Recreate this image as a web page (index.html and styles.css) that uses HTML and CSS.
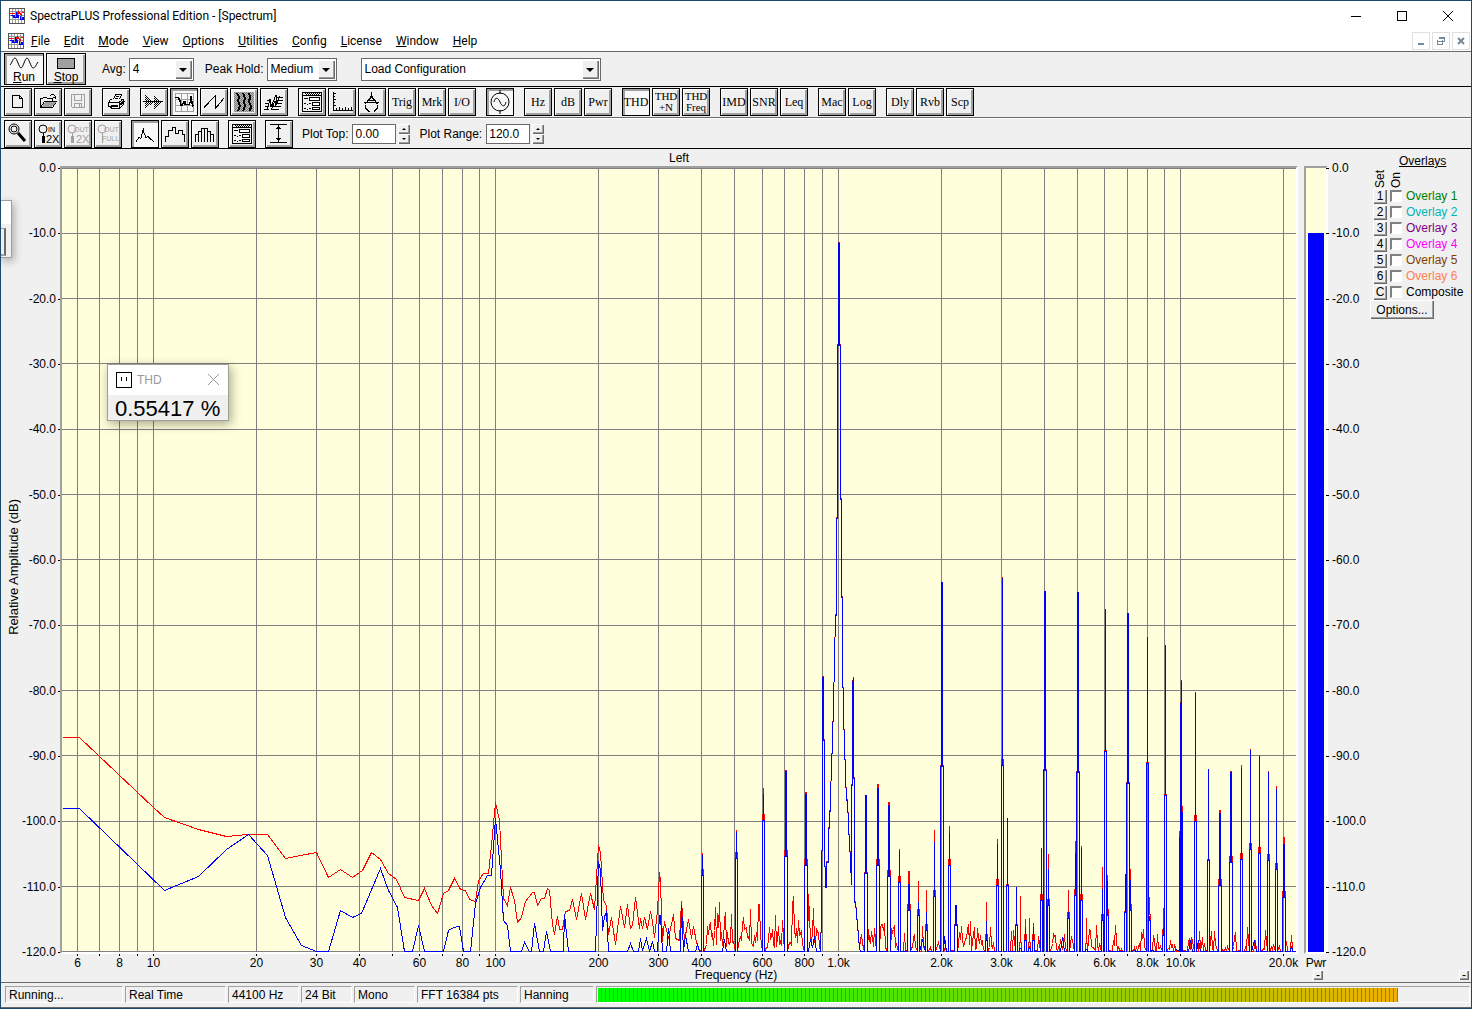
FILE: index.html
```html
<!DOCTYPE html>
<html lang="en">
<head>
  <meta charset="UTF-8">
  <title>SpectraPLUS Professional Edition - [Spectrum]</title>
  <link rel="stylesheet" href="styles.css">
</head>
<body>

<svg class="defs" width="0" height="0" aria-hidden="true">
  <defs>
    <pattern id="dither" width="2" height="2" patternUnits="userSpaceOnUse">
      <rect width="1" height="1" fill="#000"/>
      <rect x="1" y="1" width="1" height="1" fill="#000"/>
    </pattern>
    <symbol id="app" viewBox="0 0 16 16">
      <rect x=".5" y=".5" width="15" height="15" fill="#fff" stroke="#555"/>
      <path d="M3.5 1v14M6.5 1v14M9.5 1v14M12.5 1v14M1 3.5h14M1 7.5h14M1 11.5h14" stroke="#999" fill="none"/>
      <path d="M1 5.5h5M8 6.5l2 -3M10 4.5l3 3M13 4.5h2" stroke="#f00" stroke-width="1.500" fill="none"/>
      <path d="M2 7.500h3v2h3v-3l2 3M11 8.5l1 3h2v-3" stroke="#00f" stroke-width="1.500" fill="none"/>
    </symbol>
    <symbol id="form" viewBox="0 0 26 26">
      <path d="M3.5 3.5h19v19h-19zM3 6.5h20" fill="none" stroke="#000"/>
      <rect x="6" y="4" width="15" height="2" fill="url(#dither)" stroke="none"/>
      <path d="M10.5 8.5h10v3h-10zM13.5 13.5h7v3h-7zM13.5 18.5h7v2h-7z" fill="#fff" stroke="#000"/>
      <path d="M5 9.5h4M5 14.5h2M8 15.5h1M10 14.5h2M5 19.5h2M8 20.5h1M10 19.5h2" stroke="#000"/>
    </symbol>
  </defs>
</svg>

<header class="titlebar">
  <svg class="app-icon"><use href="#app"/></svg>
  <span class="title">SpectraPLUS Professional Edition - [Spectrum]</span>
  <div class="win-buttons">
    <button aria-label="Minimize"><svg width="10" height="10"><path d="M0 5.5h10"/></svg></button>
    <button aria-label="Maximize"><svg width="10" height="10"><path d="M.5 .5h9v9h-9z"/></svg></button>
    <button aria-label="Close"><svg class="smooth" width="10" height="10"><path d="M0 0l10 10M10 0L0 10"/></svg></button>
  </div>
</header>

<nav class="menubar">
  <svg class="app-icon"><use href="#app"/></svg>
  <button><u>F</u>ile</button>
  <button><u>E</u>dit</button>
  <button><u>M</u>ode</button>
  <button><u>V</u>iew</button>
  <button><u>O</u>ptions</button>
  <button><u>U</u>tilities</button>
  <button><u>C</u>onfig</button>
  <button><u>L</u>icense</button>
  <button><u>W</u>indow</button>
  <button><u>H</u>elp</button>
  <div class="mdi-buttons">
    <button aria-label="Minimize document"><svg width="10" height="10"><path d="M2 8h6" stroke-width="2"/></svg></button>
    <button aria-label="Restore document"><svg width="10" height="10"><path d="M3.5 3V1.5h5v4H7M1 5h6M1.5 4v4.5h5V4M3 2h6"/></svg></button>
    <button aria-label="Close document"><svg class="smooth" width="10" height="10"><path d="M2 2l6 6M8 2L2 8" stroke-width="2"/></svg></button>
  </div>
</nav>

<div class="toolbar toolbar-run">
  <div class="group">
    <button class="big on">
      <svg width="32" height="14" class="smooth"><path d="M2 9C4 7 5 2 7 2S11 12 13 12S17 2 19 2S23 12 25 12S28 9 30 6"/></svg>
      <span><u>R</u>un</span>
    </button>
    <button class="big">
      <svg width="32" height="14"><rect x="7.500" y="2.500" width="17" height="10" fill="#a0a0a0"/></svg>
      <span><u>S</u>top</span>
    </button>
  </div>
  <label for="avg">Avg:</label>
  <span class="select w-avg"><select id="avg"><option>4</option></select></span>
  <label for="peak">Peak Hold:</label>
  <span class="select w-peak"><select id="peak"><option>Medium</option></select></span>
  <span class="select w-config"><select aria-label="Configuration"><option>Load Configuration</option></select></span>
</div>

<div class="toolbar toolbar-main">
  <div class="group">
    <button class="tool" aria-label="New"><svg><path d="M7.500 6.500h7l3 3v9h-10zM14.500 6.500v3h3"/></svg></button>
    <button class="tool" aria-label="Open"><svg><path d="M5.500 18.500v-9h2l1 -1h3l1 1h5v3M5.500 18.500l4 -6h12l-4 6z"/><path d="M7 18l3 -5h11l-4 5z" fill="#a0a0a0" stroke="none"/><path d="M14.500 7.500l2 -2h2l2 2v2M18 8.500h3"/></svg></button>
    <button class="tool" aria-label="Save" disabled><svg><path d="M6.500 5.500h13v13h-12l-1 -1zM9.500 5.500v6h7v-6M9.500 18.500v-4h7v4M14.500 15v3"/></svg></button>
  </div>
  <div class="group">
    <button class="tool" aria-label="Print"><svg><path d="M10.500 10.500l2 -5h6l-2 5M13 7.500h3M12 9.500h3M8.500 10.500h-1l-2 3v4h2l1 2h8l4 -4v-5h-3M6 13.500h10l4 -3M16.500 14v5"/><path d="M8 16.500h7M17 16l4 -4" stroke-width="2"/></svg></button>
  </div>
  <div class="group">
    <button class="tool" aria-label="Time series"><svg><path d="M4 6l9 7l-9 7zM13 6l8 7l-8 7z" fill="url(#dither)" stroke="none"/><path d="M2 12.500h20"/></svg></button>
    <button class="tool on" aria-label="Spectrum"><svg><path class="grey" d="M4.500 4v19M10.500 4v19M16.500 4v19M22.500 4v19M4 4.500h19M4 10.500h19M4 16.500h19M4 22.500h19"/><path d="M4 8.500h3l2 3l1 5h1l2 -4h1v3h4l2 -4v-5v3l2 8" stroke-width="1.500"/></svg></button>
    <button class="tool" aria-label="Phase"><svg><path d="M3 18.500L14.500 6.500v13L23 9"/></svg></button>
    <button class="tool" aria-label="Spectrogram"><svg><rect x="3" y="3" width="20" height="20" fill="#b8b8b8" stroke="none"/><rect x="3" y="3" width="20" height="20" fill="url(#dither)" opacity=".3" stroke="none"/><path d="M6 4l2 4l-1 4l2 5l-2 5M12 4l2 5l-1 4l1 4l-2 5M18 4l1 4l-1 5l2 4l-1 5" stroke-width="2"/></svg></button>
    <button class="tool" aria-label="3-D surface"><svg><path d="M3 20.500h5M11 20.500h7M4 17.500h4M12 17.500h8M4 14.500h3M14 14.500h7M6 11.500h4M17 11.500h5M15 8.500h7M6 21l3 -11l1 8l5 -12v9l4 -8M10 21l4 -9v6l3 -6"/></svg></button>
  </div>
  <div class="group">
    <button class="tool" aria-label="Settings"><svg><use href="#form"/></svg></button>
    <button class="tool" aria-label="Scaling"><svg><path d="M4.500 3v18.500h19M4 4.500h3M4 7.500h2M4 10.500h3M4 13.500h2M4 16.500h3M7.500 19v2M10.500 18v3M13.500 19v2M16.500 18v3M19.500 19v2M22.500 18v3"/></svg></button>
    <button class="tool" aria-label="Calibration"><svg><path d="M12.500 3v4M12.500 7l-6 8M12.500 7l6 8M12.500 8l-2 3h4zM5 13.500h15M6.500 16v3l3 3h1M18.500 16v3l-3 3h-1"/></svg></button>
    <button class="tool">Trig</button>
    <button class="tool">Mrk</button>
    <button class="tool">I/O</button>
  </div>
  <div class="group">
    <button class="tool on" aria-label="Signal generator"><svg class="smooth"><circle cx="13" cy="13" r="9"/><path d="M13 1v4M13 21v4M7 13c1 -5 4 -5 6 0s5 5 6 0"/></svg></button>
  </div>
  <div class="group">
    <button class="tool">Hz</button>
    <button class="tool">dB</button>
    <button class="tool">Pwr</button>
  </div>
  <div class="group">
    <button class="tool on">THD</button>
    <button class="tool two">THD<br>+N</button>
    <button class="tool two">THD<br>Freq</button>
  </div>
  <div class="group">
    <button class="tool">IMD</button>
    <button class="tool">SNR</button>
    <button class="tool">Leq</button>
  </div>
  <div class="group">
    <button class="tool">Mac</button>
    <button class="tool">Log</button>
  </div>
  <div class="group">
    <button class="tool">Dly</button>
    <button class="tool">Rvb</button>
    <button class="tool">Scp</button>
  </div>
</div>

<div class="toolbar toolbar-plot">
  <div class="group">
    <button class="tool" aria-label="Zoom"><svg class="smooth"><circle cx="9" cy="8" r="5"/><circle cx="9" cy="8" r="3"/><path d="M13 12l7 8" stroke-width="3"/></svg></button>
    <button class="tool"><svg><circle class="smooth" cx="8" cy="8" r="4"/><path d="M8 12v3"/><path d="M8 15v7" stroke-width="3"/><text x="13" y="11" class="s">IN</text><text x="11" y="22" class="m">2X</text></svg></button>
    <button class="tool" disabled><svg><circle class="smooth" cx="7" cy="8" r="4"/><path d="M7 12v3"/><path d="M7 15v7" stroke-width="3"/><text x="9" y="11" class="s">OUT</text><text x="11" y="22" class="m">2X</text></svg></button>
    <button class="tool" disabled><svg><circle class="smooth" cx="7" cy="8" r="4"/><path d="M7 12v10"/><text x="9" y="11" class="s">OUT</text><text x="7" y="20" class="s">FULL</text></svg></button>
  </div>
  <div class="group">
    <button class="tool on" aria-label="Line plot"><svg><path d="M4 20.500l3 -4l2 1l2 -8v-3v3l3 7l2 -1l3 3l3 2"/></svg></button>
    <button class="tool" aria-label="Step plot"><svg><path d="M3.500 21v-6h3v-6h4v-3h3v6h3v-3h4v4h2v8"/></svg></button>
    <button class="tool" aria-label="Bar plot"><svg><path d="M3.500 21v-8h3v-3h3v-3h6v3h3v3h3v8M6.500 10v11M9.500 7v14M12.500 7v14M15.500 7v14M18.500 10v11"/></svg></button>
  </div>
  <div class="group">
    <button class="tool" aria-label="Plot settings"><svg><use href="#form"/></svg></button>
  </div>
  <div class="group">
    <button class="tool" aria-label="Autoscale"><svg><path d="M4 3.500h17M4 21.500h17M12.500 4v17M10 7.500h5M11 6.500h3M10 17.500h5M11 18.500h3"/></svg></button>
  </div>
  <label for="top">Plot Top:</label>
  <input class="num" id="top" type="text" value="0.00">
  <span class="spin"><button aria-label="Plot top up" class="up"></button><button aria-label="Plot top down" class="down"></button></span>
  <label for="range">Plot Range:</label>
  <input class="num" id="range" type="text" value="120.0">
  <span class="spin"><button aria-label="Plot range up" class="up"></button><button aria-label="Plot range down" class="down"></button></span>
</div>

<main class="view">
  <div class="y-title"><span>Relative Amplitude (dB)</span></div>
  <div class="scale scale-left" id="dbLeft"></div>
  <section class="chart">
    <h2>Left</h2>
    <div class="plot">
      <svg id="plot" viewBox="62 168 1234 784" preserveAspectRatio="none"></svg>
    </div>
    <svg class="x-labels" id="xLabels"></svg>
  </section>
  <section class="meter">
    <div class="meter-box"><div class="meter-track"><div class="meter-fill"></div></div></div>
    <span class="meter-name">Pwr</span>
  </section>
  <div class="scale scale-right" id="dbRight"></div>
  <aside class="overlays">
    <h2>Overlays</h2>
    <div class="heads"><span>Set</span><span>On</span></div>
    <div class="row"><button>1</button><input type="checkbox" id="o1"><label for="o1" class="c1">Overlay 1</label></div>
    <div class="row"><button>2</button><input type="checkbox" id="o2"><label for="o2" class="c2">Overlay 2</label></div>
    <div class="row"><button>3</button><input type="checkbox" id="o3"><label for="o3" class="c3">Overlay 3</label></div>
    <div class="row"><button>4</button><input type="checkbox" id="o4"><label for="o4" class="c4">Overlay 4</label></div>
    <div class="row"><button>5</button><input type="checkbox" id="o5"><label for="o5" class="c5">Overlay 5</label></div>
    <div class="row"><button>6</button><input type="checkbox" id="o6"><label for="o6" class="c6">Overlay 6</label></div>
    <div class="row"><button>C</button><input type="checkbox" id="o7"><label for="o7">Composite</label></div>
    <button class="options">Options...</button>
  </aside>
</main>

<div class="x-title">
  <span></span>
  <span>Frequency (Hz)</span>
  <div class="minis">
    <button aria-label="Hide power meter">-</button>
    <button aria-label="Hide overlays">-</button>
  </div>
</div>

<footer class="status">
  <span class="cell w1">Running...</span>
  <span class="cell w2">Real Time</span>
  <span class="cell w3">44100 Hz</span>
  <span class="cell w4">24 Bit</span>
  <span class="cell w5">Mono</span>
  <span class="cell w2">FFT 16384 pts</span>
  <span class="cell w6">Hanning</span>
  <div class="cell level"><div class="level-fill"></div></div>
</footer>

<div class="sliver"><div class="sliver-body"></div></div>

<div class="popup">
  <div class="popup-title">
    <svg class="popup-icon" width="16" height="16"><path d="M.5 .5h15v15h-15z"/><path d="M5.500 5v4M10.500 5v4"/></svg>
    <span>THD</span>
    <button aria-label="Close THD"><svg class="smooth" width="11" height="11"><path d="M0 0l11 11M11 0L0 11"/></svg></button>
  </div>
  <div class="popup-value">0.55417 %</div>
</div>

<script src="script.js"></script>
</body>
</html>
```
FILE: styles.css
```css
* { box-sizing: border-box; }
body {
  margin: 0;
  min-height: 100vh;
  display: flex;
  flex-direction: column;
  position: relative;
  border: 1px solid #1b4a6b;
  background: #f0f0f0;
  color: #000;
  font: 12px/16px "Liberation Sans", Arial, sans-serif;
}
button, input, select { font: inherit; color: inherit; margin: 0; padding: 0; }
button { border: 0; background: none; }
h2 { margin: 0; font: inherit; }
svg { fill: none; stroke: #000; shape-rendering: crispEdges; }
.smooth { shape-rendering: auto; }
.defs { position: absolute; }
#dither rect { stroke: none; }

/* title and menu */
.titlebar, .menubar {
  display: flex;
  align-items: center;
  background: #fff;
  font-family: Roboto, "Segoe UI", sans-serif;
  font-size: 12px;
}
.titlebar { height: 29px; padding-left: 8px; }
.menubar { height: 22px; padding: 0 1px 0 7px; border-bottom: 1px solid #696969; }
.app-icon { width: 16px; height: 16px; flex: none; stroke: none; }
.title { margin-left: 5px; }
.menubar > button { padding: 0 7px; }
.win-buttons { margin-left: auto; display: flex; }
.win-buttons button { width: 46px; height: 28px; }
.win-buttons svg { display: block; margin: auto; }
.mdi-buttons { margin-left: auto; display: flex; gap: 2px; }
.mdi-buttons button { width: 18px; height: 18px; border: 1px solid #e0e0e0; }
.mdi-buttons svg { display: block; margin: auto; stroke: #778899; }

/* toolbars */
.toolbar { display: flex; align-items: center; padding-left: 3px; border-bottom: 1px solid #000; }
.toolbar-run { height: 35px; }
.toolbar-main { height: 31px; border-bottom-color: #696969; }
.toolbar-plot { height: 31px; border-top: 1px solid #fff; }
.group { display: flex; gap: 2px; margin-right: 10px; }
.toolbar-plot .group { margin-right: 9px; }
.toolbar-run .group { margin-right: 16px; }
.tool, .big {
  border: 1px solid #000;
  background: #f0f0f0;
  box-shadow: inset 1px 1px #fff, inset -2px -2px #a0a0a0;
  text-align: center;
}
.tool { width: 28px; height: 28px; font: 12px/26px "Liberation Serif", "Times New Roman", serif; white-space: nowrap; display: flex; align-items: center; justify-content: center; }
.tool svg { display: block; width: 26px; height: 26px; flex: none; }
.tool:disabled svg { stroke: #a0a0a0; }
.tool text { stroke: none; fill: #000; font-family: "Liberation Sans", Arial, sans-serif; }
.tool:disabled text { fill: #a0a0a0; }
.tool .s { font-size: 7px; }
.tool .m { font-size: 11px; }
.tool .grey { stroke: #a0a0a0; }
.two { font-size: 11px; line-height: 11px; }
.big { width: 40px; height: 32px; line-height: 14px; }
.big svg { display: block; margin: 1px auto 0; }
.big span { display: block; }
.tool.on, .big.on { background: #f8f8f8; box-shadow: inset 2px 2px #a0a0a0; }

.toolbar label { margin-right: 3px; }
.toolbar-plot label { margin-right: 4px; }
.select { position: relative; display: flex; height: 23px; margin-right: 11px; }
.select select {
  width: 100%;
  appearance: none;
  border: 1px solid #696969;
  border-radius: 0;
  background: #fff;
  padding: 0 20px 0 3px;
}
.select::before {
  content: "";
  position: absolute;
  right: 2px;
  top: 2px;
  width: 17px;
  height: 19px;
  background: #f0f0f0;
  box-shadow: inset 1px 1px #fff, inset -1px -1px #696969, inset -2px -2px #a0a0a0;
  pointer-events: none;
}
.select::after {
  content: "";
  position: absolute;
  right: 7px;
  top: 10px;
  border: 4px solid transparent;
  border-top-color: #000;
  border-bottom: 0;
  pointer-events: none;
}
.w-avg { width: 65px; }
.w-peak { width: 70px; margin-right: 24px; }
.w-config { width: 240px; }
.num { width: 44px; height: 20px; border: 1px solid #696969; background: #fff; padding: 0 2px; }
.spin { display: flex; flex-direction: column; width: 12px; margin: 0 9px 0 2px; }
.spin button {
  height: 10px;
  display: flex;
  align-items: center;
  justify-content: center;
  box-shadow: inset 1px 1px #fff, inset -1px -1px #696969, inset -2px -2px #a0a0a0;
}
.spin button::before { content: ""; border: 2px solid transparent; }
.spin .up::before { border-bottom-color: #000; border-top: 0; }
.spin .down::before { border-top-color: #000; border-bottom: 0; }

/* spectrum view */
.view { flex: 1; display: flex; padding-left: 1px; min-height: 400px; }
.y-title { width: 20px; padding: 16px 0 0 4px; display: flex; align-items: center; justify-content: center; font-size: 13px; }
.y-title span { writing-mode: vertical-rl; transform: rotate(180deg); white-space: nowrap; }
.scale { display: flex; flex-direction: column; justify-content: space-between; margin: 11px 0 8px; }
.scale span { position: relative; white-space: nowrap; }
.scale-left { width: 38px; text-align: right; padding-right: 4px; }
.scale-right { width: 42px; padding-left: 4px; }
.scale span::after { content: ""; position: absolute; top: 8px; width: 3px; height: 1px; background: #000; }
.scale-left span::after { right: -5px; }
.scale-right span::after { left: -6px; }
.chart { flex: 1; min-width: 0; display: flex; flex-direction: column; }
.chart h2 { height: 17px; line-height: 18px; text-align: center; }
.plot { flex: 1; min-height: 0; position: relative; background: #ffffdc; border: 2px solid #fff; border-top-color: #a0a0a0; border-left-color: #a0a0a0; }
.plot svg { position: absolute; width: 100%; height: 100%; }
.grid { stroke: #808080; }
.peak-hold { stroke: #f00; }
.live { stroke: #00f; }
.grid, .peak-hold, .live { vector-effect: non-scaling-stroke; }
.x-labels { width: calc(100% - 4px); height: 14px; margin-left: 2px; overflow: visible; }
.x-labels text { fill: #000; stroke: none; text-anchor: middle; }
.meter { width: 24px; margin-left: 6px; padding-top: 17px; display: flex; flex-direction: column; }
.meter-box { flex: 1; display: flex; border: 2px solid #fff; border-top-color: #a0a0a0; border-left-color: #a0a0a0; background: #ffffdc; }
.meter-track { flex: 1; display: flex; align-items: flex-end; padding: 0 2px; }
.meter-fill { width: 100%; height: 91.7%; background: #00f; }
.meter-name { height: 14px; line-height: 18px; text-align: center; }

.overlays { width: 101px; padding-top: 4px; }
.overlays h2 { padding-left: 29px; text-decoration: underline; }
.heads { display: flex; height: 19px; padding-left: 2px; align-items: flex-end; }
.heads span { writing-mode: vertical-rl; transform: rotate(180deg); width: 16px; }
.row { display: flex; align-items: center; gap: 3px; height: 16px; padding-left: 3px; white-space: nowrap; }
.row button, .options, .minis button {
  background: #f0f0f0;
  box-shadow: inset 1px 1px #fff, inset -1px -1px #696969, inset -2px -2px #a0a0a0;
}
.row button { width: 14px; height: 15px; line-height: 14px; }
.row input {
  appearance: none;
  width: 12px;
  height: 12px;
  background: #fff;
  border: 1px solid #fff;
  border-top: 2px solid #808080;
  border-left: 2px solid #808080;
}
.row label { margin-left: 1px; }
.c1 { color: #008000; }
.c2 { color: #00b4b4; }
.c3 { color: #800080; }
.c4 { color: #f0f; }
.c5 { color: #804000; }
.c6 { color: #ff8050; }
.options { width: 64px; height: 19px; }

.x-title { display: grid; grid-template-columns: 1fr auto 1fr; height: 14px; line-height: 14px; }
.minis { display: flex; justify-content: flex-end; gap: 136px; padding: 2px 2px 0 0; }
.minis button { width: 10px; height: 10px; line-height: 8px; }

/* status bar */
.status {
  display: flex;
  gap: 2px;
  height: 26px;
  padding: 3px 1px 4px 4px;
  border-top: 1px solid #696969;
  border-bottom: 1px solid #696969;
}
.cell { border: 1px solid #fff; border-top-color: #a0a0a0; border-left-color: #a0a0a0; padding-left: 3px; line-height: 16px; white-space: nowrap; }
.w1 { width: 118px; }
.w2 { width: 101px; }
.w3 { width: 71px; }
.w4 { width: 51px; }
.w5 { width: 61px; }
.w6 { width: 74px; }
.level { flex: 1; padding: 1px; }
.level-fill {
  width: 92%;
  height: 14px;
  background:
    repeating-linear-gradient(90deg, transparent 0 3px, #808040 3px 4px),
    linear-gradient(90deg, #0f0 5%, #f0b000);
}

/* floating windows */
.sliver {
  position: absolute;
  left: -1px;
  top: 199px;
  width: 12px;
  height: 58px;
  padding-top: 23px;
  background: #fff;
  border: 1px solid #a0a0a0;
  border-left: 0;
  box-shadow: 2px 3px 8px rgba(0, 0, 0, .3);
}
.sliver-body { height: 33px; background: #f0f0f0; padding: 4px 5px 4px 0; }
.sliver-body::before { content: ""; display: block; height: 25px; border: 1px solid #a0a0a0; border-width: 1px 2px 2px 0; border-right-color: #696969; }
.popup {
  position: absolute;
  left: 106px;
  top: 363px;
  width: 122px;
  background: #f0f0f0;
  border: 1px solid #a0a090;
  box-shadow: 2px 3px 10px rgba(0, 0, 0, .35);
}
.popup-title { display: flex; align-items: center; gap: 5px; height: 30px; padding: 0 9px 1px 8px; background: #fff; color: #999; }
.popup-title button { margin-left: auto; height: 11px; }
.popup-title button svg { display: block; stroke: #999; }
.popup-value { height: 25px; padding-left: 7px; font-size: 22px; line-height: 28px; white-space: nowrap; }
```
FILE: script.js
```js
const NS = 'http://www.w3.org/2000/svg';
const plot = document.getElementById('plot');
const xLabels = document.getElementById('xLabels');

const LEFT = 62, RIGHT = 1296, TOP = 168, FLOOR = 951;
const xOf = f => 153 + 342.5 * Math.log10(f / 10);

function add(parent, tag, attrs, text) {
  const el = document.createElementNS(NS, tag);
  for (const k in attrs) el.setAttribute(k, attrs[k]);
  if (text) el.textContent = text;
  parent.appendChild(el);
}

// grid
for (let db = 0; db <= 120; db += 10) {
  const y = Math.floor(TOP + db * 6.53) + 0.5;
  add(plot, 'path', { class: 'grid', d: `M${LEFT} ${y}H${RIGHT}` });
  for (const id of ['dbLeft', 'dbRight']) {
    const s = document.createElement('span');
    s.textContent = (db ? '-' : '') + db.toFixed(1);
    document.getElementById(id).appendChild(s);
  }
}
const named = { 6: '6', 8: '8', 10: '10', 20: '20', 30: '30', 40: '40', 60: '60', 80: '80', 100: '100', 200: '200',
  300: '300', 400: '400', 600: '600', 800: '800', 1000: '1.0k', 2000: '2.0k', 3000: '3.0k', 4000: '4.0k',
  6000: '6.0k', 8000: '8.0k', 10000: '10.0k', 20000: '20.0k' };
for (const decade of [1, 10, 100, 1000, 10000]) {
  for (let n = 1; n < 10; n++) {
    const f = n * decade;
    if (f < 6 || f > 21000) continue;
    const x = Math.floor(xOf(f)) + 0.5;
    const pct = (x - LEFT) / (RIGHT - LEFT) * 100 + '%';
    add(plot, 'path', { class: 'grid', d: `M${x} ${TOP}V${FLOOR}` });
    add(xLabels, 'line', { x1: pct, x2: pct, y1: -2, y2: 2 });
    if (named[f]) add(xLabels, 'text', { x: pct, y: 13 }, named[f]);
  }
}

// low end of both traces
const redLow = [62,737,79,737,153,807,164,817,198,829,226,836,247,834,267,834,285,858,300,855,316,852,328,877,340,869,
  352,877,362,870,371,852,380,859,388,873,396,879,404,897,418,900,424,888,431,905,437,913,443,893,448,890,454,878,
  460,889,465,890,469,899,475,901,478,880,483,873,488,873,491,845,495,802,499,820,503,898,507,905,510,887,514,900,
  517,922,521,917,525,901,532,892,534,892,537,905,541,898,544,898,547,888,549,890,552,924,554,934,557,916,559,929,
  562,929,565,911,569,910,572,899,576,919,581,893,585,919,590,893,594,909,598,845,600,852,603,900,606,905,608,934,
  611,917,615,944,620,906,624,927,627,904,630,928,632,925,635,897,639,928,640,918,642,928,644,917,647,929,650,911,
  652,921,654,937,657,910,659,872,660,880,661,914,662,941,664,921,668,938,673,914,675,938,679,940,681,901,684,940,
  688,919,691,938,693,926,696,942,698,948];
const blueLow = [62,808,79,808,164,890,198,876,226,849,248,834,267,855,285,917,301,945,316,951,328,951,340,910,352,917,
  361,913,380,868,388,890,397,907,404,951,412,951,418,925,424,951,443,951,448,930,453,927,459,926,463,951,470,951,
  475,903,480,887,487,875,491,875,495,818,500,870,503,920,507,925,510,951,521,951,524,942,529,951,531,951,534,923,
  539,951,543,951,546,931,550,951,563,951,564,914,568,951,595,951,598,861,600,870,602,930,604,916,606,912,608,951,
  627,951,630,943,633,951,638,951,640,938,642,950,646,938,649,951,652,941,654,951,657,951,659,915,660,915,662,951,
  666,951,668,928,670,951,680,951,681,905,683,951,685,935,688,951,695,951,697,944,699,951];

// x, live top, held top, shoulder, 1 = two columns wide
const peaks = [
  [702,854,852,875],[736,831,829,858],[763,793,787,820],[785,771,770,856,1],[805,794,792,865,1],
  [865,795,795,873,1],[877,788,784,865,1],[888,805,802,876,1],[899,850,848,882],[908,884,871,910,1],[918,901,880,915],
  [926,911,889,930],[934,841,829,896],[941,582,582,766,1],[949,832,825,865],[955,905,905,925,1],[986,920,901,940],
  [997,843,838,885],[1002,577,576,765],[1007,817,817,885],[1016,886,886,925],[1020,948,895,948],[1025,926,918,940],
  [1029,945,917,948],[1033,926,922,940],[1041,848,847,900],[1044,591,591,770,1],[1048,868,853,905],[1068,911,889,918],
  [1075,852,840,895],[1077,592,592,772,1],[1081,847,845,900],[1086,948,917,949],[1102,888,866,920],[1105,608,608,751],
  [1107,880,874,915],[1125,873,873,912],[1127,613,613,783,1],[1130,879,868,910],[1147,636,636,763],[1149,915,896,920],
  [1163,927,907,935],[1165,644,644,795],[1180,702,701,837],[1181,680,679,812],[1195,692,691,821],[1208,768,768,860],
  [1219,813,810,885,1],[1230,772,771,862,1],[1241,767,764,859],[1250,749,748,849],[1259,755,754,853],[1268,771,770,860],
  [1276,788,785,869],[1283,844,837,897,1],[1291,945,934,948]];

const skirt = [820,951,821,915,822,790,822,677,823,677,823,740,824,740,824,845,825,887,826,887,826,862,828,862,828,828,
  829,828,830,795,831,768,832,740,833,705,834,661,835,615,836,615,836,518,837,518,837,345,838,345,838,243,839,243,
  839,345,840,345,840,499,841,499,841,597,842,597,842,660,843,714,844,745,845,774,846,800,847,800,848,825,849,843,
  850,860,851,884,851,785,852,785,852,684,853,678,853,778,854,778,854,902,855,902,857,925,859,948];

function pairs(flat) {
  const out = [];
  for (let i = 0; i < flat.length; i += 2) out.push([flat[i], flat[i + 1]]);
  return out;
}

let seed = 7;
function rnd() {
  seed = (seed * 16807) % 2147483647;
  return seed / 2147483647;
}

function noise(held, x) {
  if (!held) return rnd() > 0.9 ? FLOOR - rnd() * 16 : FLOOR;
  if (x < 822) return FLOOR - 4 - rnd() * rnd() * 54;
  if (x < 900) return FLOOR - 3 - rnd() * 26;
  if (x < 1110) return FLOOR - rnd() * rnd() * 32;
  return FLOOR - rnd() * rnd() * rnd() * 36;
}

function trace(held) {
  const pts = pairs(held ? redLow : blueLow).concat(pairs(skirt).map(([x, y]) => [x, held ? y - 1 : y]));
  for (const [x, live, max, shoulder, wide] of peaks) {
    const sh = held ? shoulder - (max < live ? 6 : 1) : shoulder;
    const top = held ? max : live;
    const r = wide ? x + 1 : x;
    pts.push([x - 1, FLOOR], [x - 1, sh], [x, sh], [x, top], [r, top], [r, sh], [r + 1, sh], [r + 1, FLOOR]);
  }
  for (let x = 700; x < 1293; x += held ? 1 : 2) {
    if (x > 819 && x < 860) continue;
    if (peaks.some(p => Math.abs(p[0] - x) < 3)) continue;
    pts.push([x, noise(held, x)]);
  }
  pts.sort((a, b) => a[0] - b[0]);
  if (!held) pts.push([RIGHT, FLOOR]);
  add(plot, 'polyline', {
    class: held ? 'peak-hold' : 'live',
    points: pts.map(([x, y]) => `${x + 0.5},${Math.round(y) + 0.5}`).join(' ')
  });
}

trace(true);
trace(false);
```
